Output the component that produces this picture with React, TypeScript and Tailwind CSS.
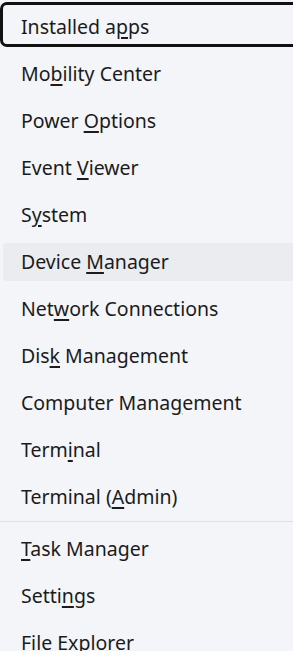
import type { JSX, ReactNode } from 'react';

interface IMenuItem {
  /** Text before the access key. */
  pre: string;
  /** Access key letter, drawn underlined. */
  key: string;
  /** Text after the access key. */
  post: string;
  focused?: boolean;
  hovered?: boolean;
}

const GROUP_ONE: IMenuItem[] = [
  { pre: 'Installed a', key: 'p', post: 'ps', focused: true },
  { pre: 'Mo', key: 'b', post: 'ility Center' },
  { pre: 'Power ', key: 'O', post: 'ptions' },
  { pre: 'Event ', key: 'V', post: 'iewer' },
  { pre: 'S', key: 'y', post: 'stem' },
  { pre: 'Device ', key: 'M', post: 'anager', hovered: true },
  { pre: 'Net', key: 'w', post: 'ork Connections' },
  { pre: 'Dis', key: 'k', post: ' Management' },
  { pre: 'Computer Mana', key: 'g', post: 'ement' },
  { pre: 'Term', key: 'i', post: 'nal' },
  { pre: 'Terminal (', key: 'A', post: 'dmin)' },
];

const GROUP_TWO: IMenuItem[] = [
  { pre: '', key: 'T', post: 'ask Manager' },
  { pre: 'Setti', key: 'n', post: 'gs' },
  { pre: 'File Explorer', key: '', post: '' },
];

function AccessKey({ children }: { children: ReactNode }): JSX.Element {
  return (
    <span className="underline decoration-[1.5px] underline-offset-[3px]">{children}</span>
  );
}

function MenuRow({ item }: { item: IMenuItem }): JSX.Element {
  // The keyboard-focus ring sits a little higher than the text in the screenshot.
  let boxClass = 'h-[44px] border-[3px] border-transparent';
  if (item.focused) {
    boxClass = '-mt-[1px] h-[45px] self-start border-[3px] border-[#111111] pt-[5px]';
  } else if (item.hovered) {
    boxClass = 'h-[44px] border-[3px] border-transparent bg-[#eaecf0] bg-clip-padding';
  }

  return (
    <div className="flex h-[47px] items-center">
      <div className={`flex flex-1 items-center rounded-[7px] pl-[18px] ${boxClass}`}>
        <span className="text-[19.5px] leading-none text-[#1b1b1b]">
          {item.pre}
          {item.key && <AccessKey>{item.key}</AccessKey>}
          {item.post}
        </span>
      </div>
    </div>
  );
}

export default function App(): JSX.Element {
  return (
    <div
      className="h-[651px] w-full overflow-hidden bg-[#f3f5f8]"
      style={{ fontFamily: '"Noto Sans", "Open Sans", sans-serif' }}
    >
      <div className="w-[320px] pt-[3px]">
        {GROUP_ONE.map((item) => (
          <MenuRow key={item.pre + item.key} item={item} />
        ))}
        <div className="mb-[3px] mt-[1px] h-[1px] bg-[#dfe0e3]" />
        {GROUP_TWO.map((item) => (
          <MenuRow key={item.pre + item.key} item={item} />
        ))}
      </div>
    </div>
  );
}
